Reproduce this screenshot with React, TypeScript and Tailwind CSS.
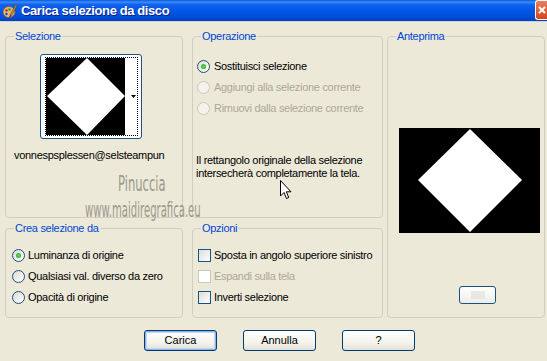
import { FC, ReactNode } from "react";

const font = "font-['Liberation_Sans',Arial,sans-serif]";

const Group: FC<{ title: string; className: string; children?: ReactNode }> = ({ title, className, children }) => (
	<fieldset className={`border border-[#D0D0BF] rounded-[4px] ${className}`}>
		<legend className="ml-[8px] px-[1px] text-[#0046D5] text-[11px] leading-[13px]">{title}</legend>
		{children}
	</fieldset>
);

const Radio: FC<{ checked?: boolean; disabled?: boolean }> = ({ checked, disabled }) => (
	<span
		className={`relative flex items-center justify-center w-[13px] h-[13px] rounded-full border shrink-0 ${
			disabled
				? "border-[#CAC8BB] bg-[#F3F2EC]"
				: "border-[#1C5180] bg-[linear-gradient(135deg,#DCDAD2,#FFFFFF)]"
		}`}
	>
		{checked && <span className="w-[5px] h-[5px] rounded-full bg-[radial-gradient(circle,#5FE05F,#18A018)]" />}
	</span>
);

const Check: FC<{ disabled?: boolean }> = ({ disabled }) => (
	<span
		className={`w-[13px] h-[13px] border shrink-0 ${
			disabled
				? "border-[#CAC8BB] bg-white"
				: "border-[#1C5180] bg-[linear-gradient(135deg,#DCDCD7,#FFFFFF)]"
		}`}
	/>
);

const Button: FC<{ label: string; primary?: boolean }> = ({ label, primary }) => (
	<button
		className={`w-[73px] h-[21px] rounded-[3px] border border-[#003C74] text-[11px] text-black bg-[linear-gradient(180deg,#FFFFFF,#F4F3EE_60%,#E3E1D6)] ${
			primary ? "shadow-[inset_0_0_0_1px_#8EB3E8,inset_0_0_0_2px_#C3D6F4]" : ""
		}`}
	>
		{label}
	</button>
);

export default function App() {
	return (
		<div className={`relative w-[547px] h-[361px] overflow-hidden bg-[#ECE9D8] ${font}`}>
			{/* title bar */}
			<div className="flex items-center h-[22px] bg-[linear-gradient(180deg,#0A5AE6_0%,#3C8CF6_10%,#0F62EE_22%,#0055E5_55%,#004BD6_85%,#0040C2_100%)] border-b border-[#D6D3C4]">
				<svg width="16" height="16" viewBox="0 0 16 16" className="ml-[2px]">
					<ellipse cx="7" cy="9" rx="6" ry="5.5" fill="#E8B878" stroke="#8A5A2A" strokeWidth="0.8" />
					<circle cx="4.5" cy="7.5" r="1.3" fill="#E02020" />
					<circle cx="7.5" cy="6.5" r="1.2" fill="#20A020" />
					<circle cx="4.5" cy="11" r="1.2" fill="#2040E0" />
					<path d="M14 1 L8 12 L9.5 13 L15 2 Z" fill="#C89A50" stroke="#5A3A10" strokeWidth="0.6" />
					<path d="M8 12 L7 15 L9.5 13 Z" fill="#303030" />
				</svg>
				<span className="ml-[3px] text-white font-bold text-[13px] tracking-[-0.4px] [text-shadow:1px_1px_0_#0A1E8C]">
					Carica selezione da disco
				</span>
				<div className="ml-auto self-start w-[12px] h-[20px] rounded-l-[3px] border border-r-0 border-white bg-[linear-gradient(180deg,#E8805A,#D2461E)] overflow-hidden relative">
					<svg width="12" height="20" viewBox="0 0 12 20" className="absolute left-0 top-0">
						<path d="M3 5 L9 11 M9 5 L3 11" stroke="white" strokeWidth="2" transform="translate(0,1)" />
					</svg>
				</div>
			</div>

			{/* body */}
			<div className="flex pl-[5px] pt-[8px] tracking-[-0.3px]">
				<div className="flex flex-col gap-[4px] w-[178px]">
					<Group title="Selezione" className="h-[188px]">
						<div className="ml-[34px] mt-[11px] w-[102px] h-[85px] border border-[#1C5180] rounded-[3px] bg-white pt-[2px] pl-[4px] pr-[3px] pb-[2px]">
							<div className="flex h-full border border-dotted border-black">
								<svg width="79" height="77" viewBox="0 0 79 77" className="shrink-0">
									<rect width="79" height="77" fill="black" />
									<polygon points="41,0 79,38 41,77 1,38" fill="white" />
								</svg>
								<div className="flex-1 flex items-center justify-end pr-[1px]">
									<svg width="5" height="3" viewBox="0 0 5 3">
										<polygon points="0,0 5,0 2.5,3" fill="black" />
									</svg>
								</div>
							</div>
						</div>
						<div className="ml-[8px] mt-[10px] text-[11px] leading-[13px] text-black whitespace-nowrap">
							vonnespsplessen@selsteampun
						</div>
					</Group>
					<Group title="Crea selezione da" className="h-[96px]">
						<div className="flex flex-col mt-[10px] ml-[6px] text-[11px] text-black whitespace-nowrap">
							<label className="flex items-center gap-[3px] h-[21px]">
								<Radio checked />
								Luminanza di origine
							</label>
							<label className="flex items-center gap-[3px] h-[21px]">
								<Radio />
								Qualsiasi val. diverso da zero
							</label>
							<label className="flex items-center gap-[3px] h-[20px]">
								<Radio />
								Opacità di origine
							</label>
						</div>
					</Group>
				</div>

				<div className="flex flex-col gap-[4px] w-[191px] ml-[9px]">
					<Group title="Operazione" className="h-[188px]">
						<div className="flex flex-col mt-[13px] ml-[4px] text-[11px] whitespace-nowrap">
							<label className="flex items-center gap-[4px] h-[21px] text-black">
								<Radio checked />
								Sostituisci selezione
							</label>
							<label className="flex items-center gap-[4px] h-[21px] text-[#ACA899]">
								<Radio disabled />
								Aggiungi alla selezione corrente
							</label>
							<label className="flex items-center gap-[4px] h-[21px] text-[#ACA899]">
								<Radio disabled />
								Rimuovi dalla selezione corrente
							</label>
						</div>
						<p className="ml-[3px] mt-[35px] text-[11px] leading-[13px] text-black whitespace-nowrap">
							Il rettangolo originale della selezione
							<br />
							intersecherà completamente la tela.
						</p>
					</Group>
					<Group title="Opzioni" className="h-[96px]">
						<div className="flex flex-col mt-[10px] ml-[5px] text-[11px] whitespace-nowrap">
							<label className="flex items-center gap-[3px] h-[21px] text-black">
								<Check />
								Sposta in angolo superiore sinistro
							</label>
							<label className="flex items-center gap-[3px] h-[21px] text-[#ACA899]">
								<Check disabled />
								Espandi sulla tela
							</label>
							<label className="flex items-center gap-[3px] h-[20px] text-black">
								<Check />
								Inverti selezione
							</label>
						</div>
					</Group>
				</div>

				<Group title="Anteprima" className="w-[158px] h-[288px] ml-[4px]">
					<svg width="141" height="105" viewBox="0 0 141 105" className="ml-[11px] mt-[85px] block">
						<rect width="141" height="105" fill="black" />
						<polygon points="71,1 123,52 71,104 19,52" fill="white" />
					</svg>
					<div className="ml-[71px] mt-[53px] w-[37px] h-[18px] rounded-[3px] border border-[#1C5180] bg-[linear-gradient(180deg,#FFFFFF,#EDEDE8)] flex items-center justify-center">
						<div className="w-[14px] h-[8px] bg-[#E4E4E0] opacity-80" />
					</div>
				</Group>
			</div>

			{/* buttons */}
			<div className="flex gap-[26px] pl-[144px] mt-[12px]">
				<Button label="Carica" primary />
				<Button label="Annulla" />
				<Button label="?" />
			</div>

			{/* watermark */}
			<div className="absolute left-[118px] top-[173px] text-[#9C998D] text-[21px] leading-[22px] font-['DejaVu_Sans',sans-serif] scale-x-[0.55] origin-left whitespace-nowrap">
				Pinuccia
			</div>
			<div className="absolute left-[85px] top-[199px] text-[#9C998D] text-[21px] leading-[22px] font-['DejaVu_Sans',sans-serif] scale-x-[0.48] origin-left whitespace-nowrap">
				www.maidiregrafica.eu
			</div>

			{/* mouse cursor */}
			<svg width="13" height="21" viewBox="0 0 13 21" className="absolute left-[280px] top-[180px]">
				<path d="M0.5 0.5 L0.5 16 L4 12.5 L6.5 18.5 L8.8 17.5 L6.3 11.8 L11 11.8 Z" fill="white" stroke="black" strokeWidth="1" />
			</svg>
		</div>
	);
}
